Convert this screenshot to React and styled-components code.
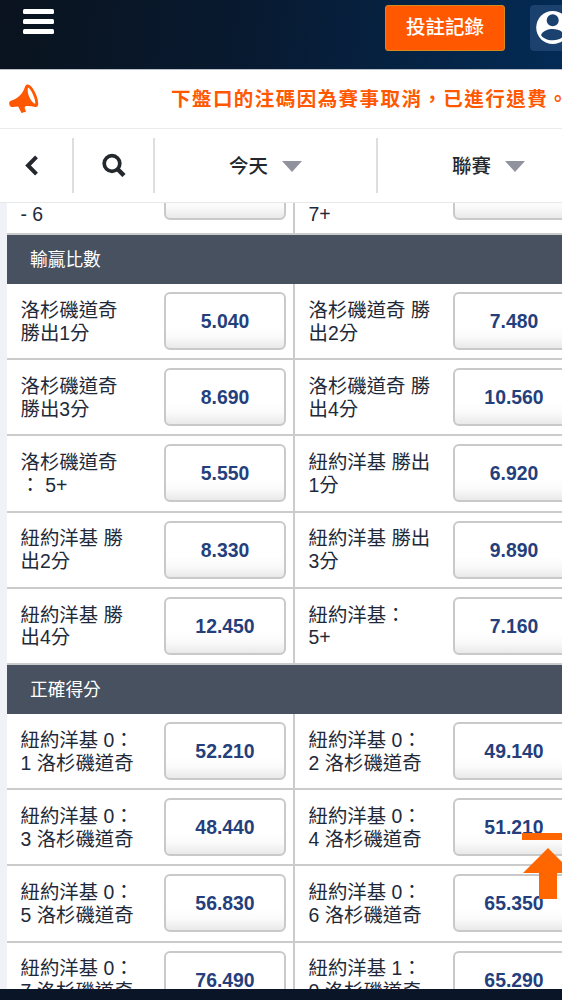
import styled, { createGlobalStyle } from "styled-components";

const GlobalStyle = createGlobalStyle`
    * {
        box-sizing: border-box;
    }
    body {
        margin: 0;
        overflow: hidden;
        font-family: "Liberation Sans", "Noto Sans CJK TC", sans-serif;
        color: #1e2a3a;
    }
    svg {
        display: block;
        flex: none;
    }
`;

const Screen = styled.div`
    position: relative;
    display: flex;
    flex-direction: column;
    width: 562px;
    height: 1000px;
    overflow: hidden;
    background: #f1f2f7;
`;

const TopBar = styled.header`
    display: flex;
    align-items: flex-start;
    flex: none;
    height: 70px;
    padding: 5px 0 0 23px;
    background: linear-gradient(97deg, #0a131e 0%, #081a31 45%, #032b55 100%);
    border-bottom: 1px solid #b9c0c9;
`;

const MenuButton = styled.div`
    display: flex;
    flex-direction: column;
    gap: 5px;
    width: 31px;
    padding-top: 3.5px;

    & span {
        height: 5.3px;
        border-radius: 1.5px;
        background: #fff;
    }
`;

const BetButton = styled.div`
    flex: none;
    width: 120px;
    height: 46px;
    margin: 0 25px 0 auto;
    border: 1px solid #d68a1c;
    border-radius: 3px;
    background: #ff5800;
    color: #fff;
    font-size: 19.5px;
    font-weight: 500;
    line-height: 43px;
    text-align: center;
`;

const AccountButton = styled.div`
    flex: none;
    width: 32px;
    height: 46px;
    padding: 3px 0 0 3px;
    border-radius: 4px 0 0 4px;
    background: #1b416e;
    overflow: hidden;
`;

const Notice = styled.div`
    display: flex;
    align-items: center;
    flex: none;
    height: 59px;
    padding-left: 8px;
    background: #fff;
    border-bottom: 1px solid #ececec;

    & p {
        margin: 0 0 4px 131px;
        color: #ff5800;
        font-size: 19.5px;
        font-weight: 700;
        letter-spacing: 1.45px;
        white-space: nowrap;
    }
`;

const FilterBar = styled.nav`
    display: flex;
    align-items: center;
    flex: none;
    height: 74px;
    background: #fff;
    border-bottom: 1px solid #e8e8e8;
`;

const FilterItem = styled.div`
    display: flex;
    align-items: center;
    justify-content: center;
    flex: none;
    gap: 14px;
    width: ${({ $width }) => $width}px;
    height: 55px;
    padding-right: ${({ $shift }) => $shift || 0}px;
    padding-bottom: 2px;
    border-right: 2px solid #dedede;
    color: #24282d;
    font-size: 19.5px;
    font-weight: 500;
`;

const Caret = styled.span`
    width: 0;
    height: 0;
    margin-top: 3px;
    border: 10px solid transparent;
    border-top: 11px solid #90939d;
    border-bottom: 0;
`;

const Board = styled.main`
    flex: none;
    width: 577px;
    height: 786px;
    margin-left: 7px;
    overflow: hidden;
    background: #fff;
`;

const Heading = styled.h2`
    height: 49px;
    margin: 0;
    padding-left: 23px;
    background: #48515f;
    color: #fff;
    font-size: 17.7px;
    font-weight: 400;
    line-height: 51px;
`;

const Row = styled.div`
    display: grid;
    grid-template-columns: 288px 289px;
    grid-template-rows: 100%;
    height: ${({ $height }) => $height || 76.2}px;
    border-bottom: 2px solid #cbcbcb;
    overflow: hidden;
`;

const Cell = styled.div`
    display: flex;
    align-items: ${({ $end }) => ($end ? "flex-end" : "center")};
    justify-content: space-between;
    height: 100%;
    padding: 0 7px 0 13.5px;
    padding-bottom: ${({ $end }) => ($end ? 13 : 0)}px;
    border-right: 2px solid #cbcbcb;
`;

const Label = styled.div`
    font-size: 19.4px;
    line-height: 22.8px;
    white-space: pre;
    margin-bottom: ${({ $end }) => ($end ? "-6px" : "-1px")};
`;

const Odds = styled.div`
    flex: none;
    width: 122px;
    height: 58px;
    border: 2px solid #c9c9c9;
    border-radius: 6px;
    background: linear-gradient(#fff 60%, #fafafa 80%, #e9e9e9 100%);
    color: #253f7c;
    font-size: 19.4px;
    font-weight: 700;
    line-height: 54px;
    text-align: center;
`;

const Footer = styled.div`
    flex: none;
    height: 11px;
    background: #0a1528;
`;

const BackToTop = styled.div`
    position: absolute;
    top: 832px;
    left: 521px;
`;

const winMargin = [
    ["洛杉磯道奇\n勝出1分", "5.040", "洛杉磯道奇 勝\n出2分", "7.480"],
    ["洛杉磯道奇\n勝出3分", "8.690", "洛杉磯道奇 勝\n出4分", "10.560"],
    ["洛杉磯道奇\n： 5+", "5.550", "紐約洋基 勝出\n1分", "6.920"],
    ["紐約洋基 勝\n出2分", "8.330", "紐約洋基 勝出\n3分", "9.890"],
    ["紐約洋基 勝\n出4分", "12.450", "紐約洋基：\n5+", "7.160"],
];

const correctScore = [
    ["紐約洋基 0：\n1 洛杉磯道奇", "52.210", "紐約洋基 0：\n2 洛杉磯道奇", "49.140"],
    ["紐約洋基 0：\n3 洛杉磯道奇", "48.440", "紐約洋基 0：\n4 洛杉磯道奇", "51.210"],
    ["紐約洋基 0：\n5 洛杉磯道奇", "56.830", "紐約洋基 0：\n6 洛杉磯道奇", "65.350"],
    ["紐約洋基 0：\n7 洛杉磯道奇", "76.490", "紐約洋基 1：\n0 洛杉磯道奇", "65.290"],
];

function Market({ title, rows }) {
    return (
        <section>
            <Heading>{title}</Heading>
            {rows.map(([home, homeOdds, away, awayOdds]) => (
                <Row key={home + away}>
                    <Cell>
                        <Label>{home}</Label>
                        <Odds>{homeOdds}</Odds>
                    </Cell>
                    <Cell>
                        <Label>{away}</Label>
                        <Odds>{awayOdds}</Odds>
                    </Cell>
                </Row>
            ))}
        </section>
    );
}

export default function App() {
    return (
        <>
            <GlobalStyle />
            <Screen>
                <TopBar>
                    <MenuButton>
                        <span />
                        <span />
                        <span />
                    </MenuButton>
                    <BetButton>投註記錄</BetButton>
                    <AccountButton>
                        <svg width="40" height="40" viewBox="0 0 40 40">
                            <circle cx="19.7" cy="19.5" r="16.5" fill="#fff" />
                            <circle cx="19.7" cy="12.3" r="6" fill="#1b416e" />
                            <path
                                d="M8 27C10 22.7 15 21 19.7 21s9.700 1.700 11.700 6c-2 3.200-6 5.300-11.700 5.300S10 30.200 8 27z"
                                fill="#1b416e"
                            />
                        </svg>
                    </AccountButton>
                </TopBar>
                <Notice>
                    <svg width="32" height="32" viewBox="0 0 32 32" fill="#ff5800">
                        <path
                            fillRule="evenodd"
                            d="M18.500 1.800C20.500 1 22.500 2.500 24.500 5c3.500 5 5.700 11 5.700 16 0 2.200-1.200 3.200-3 2.900-3-.9-6.500-1.200-9.500-.9l-1.200 1.800 1.500 4-4.500 1.200-3.300-6.500C6.500 23.700 3 25 1.700 22.500.6 20 1 18.300 3.500 17.500 11 15 15 10 17 3.800c.3-1 .8-1.700 1.500-2zM20 4.500c-1 3.500.3 8.200 2.300 11.500 1.500 2.700 3.300 4.500 4.900 4.800C28 17 23.500 6.500 20 4.500z"
                        />
                    </svg>
                    <p>下盤口的注碼因為賽事取消，已進行退費。</p>
                </Notice>
                <FilterBar>
                    <FilterItem $width={74} $shift={9}>
                        <svg width="16" height="22" viewBox="0 0 16 22">
                            <path
                                d="M12.500 2.800L4 11.500l8.500 8.700"
                                fill="none"
                                stroke="#24282d"
                                strokeWidth="4"
                            />
                        </svg>
                    </FilterItem>
                    <FilterItem $width={81}>
                        <svg width="24" height="24" viewBox="0 0 24 24" fill="none" stroke="#24282d">
                            <circle cx="10" cy="10.500" r="7.800" strokeWidth="3.700" />
                            <path d="M15.500 16l6.500 6.500" strokeWidth="4.500" />
                        </svg>
                    </FilterItem>
                    <FilterItem $width={223}>
                        今天
                        <Caret />
                    </FilterItem>
                    <FilterItem $width={223}>
                        聯賽
                        <Caret />
                    </FilterItem>
                </FilterBar>
                <Board>
                    <Row $height={32}>
                        <Cell $end>
                            <Label $end>- 6</Label>
                            <Odds />
                        </Cell>
                        <Cell $end>
                            <Label $end>7+</Label>
                            <Odds />
                        </Cell>
                    </Row>
                    <Market title="輸贏比數" rows={winMargin} />
                    <Market title="正確得分" rows={correctScore} />
                </Board>
                <Footer />
                <BackToTop>
                    <svg width="54" height="68" viewBox="0 0 54 68" fill="#ff6600">
                        <path d="M1 1h52v7H1z" />
                        <path d="M27 16L52 41H36v26H18V41H2z" />
                    </svg>
                </BackToTop>
            </Screen>
        </>
    );
}
